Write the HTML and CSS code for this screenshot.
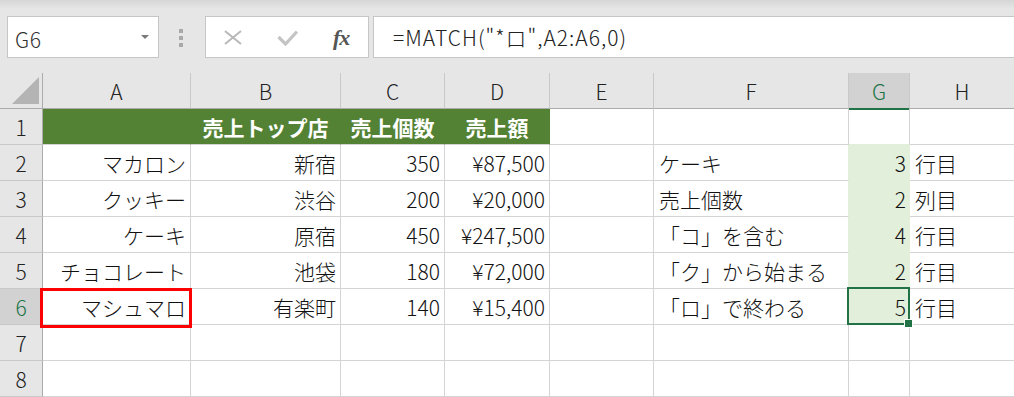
FILE: index.html
```html
<!DOCTYPE html>
<html lang="ja">

<head>
    <meta charset="UTF-8">
    <meta name="viewport" content="width=device-width, initial-scale=1.0">
    <title>MATCH関数</title>
    <link rel="stylesheet" href="styles.css">
</head>

<body>
    <!-- 数式バー -->
    <div class="toolbar">
        <div class="name-box">
            <span class="name">G6</span>
            <span class="drop"></span>
        </div>
        <div class="grip"><span></span><span></span><span></span></div>
        <div class="fx-box">
            <svg class="icon" width="18" height="15" viewBox="0 0 18 15">
                <path d="M1 1 L17 14 M17 1 L1 14" stroke="#b8b8b8" stroke-width="2" fill="none" />
            </svg>
            <svg class="icon" width="21" height="16" viewBox="0 0 21 16">
                <path d="M1.5 7 L8.5 14 L20 1.5" stroke="#c4c4c4" stroke-width="3.2" fill="none" />
            </svg>
            <span class="fx">fx</span>
        </div>
        <div class="formula">=MATCH("*ロ",A2:A6,0)</div>
    </div>

    <!-- シート -->
    <div class="sheet">
        <div class="corner"><svg width="27" height="27" viewBox="0 0 27 27"><path d="M27 0 L27 27 L0 27 Z" fill="#b4b4b4" /></svg></div>
        <div class="ch">A</div>
        <div class="ch">B</div>
        <div class="ch">C</div>
        <div class="ch">D</div>
        <div class="ch">E</div>
        <div class="ch">F</div>
        <div class="ch active">G</div>
        <div class="ch">H</div>

        <div class="rh">1</div>
        <div class="cell hd"></div>
        <div class="cell hd">売上トップ店</div>
        <div class="cell hd">売上個数</div>
        <div class="cell hd">売上額</div>
        <div class="cell"></div>
        <div class="cell"></div>
        <div class="cell top-pick"></div>
        <div class="cell"></div>

        <div class="rh">2</div>
        <div class="cell">マカロン</div>
        <div class="cell">新宿</div>
        <div class="cell">350</div>
        <div class="cell">¥87,500</div>
        <div class="cell"></div>
        <div class="cell left by-pick">ケーキ</div>
        <div class="cell pick">3</div>
        <div class="cell left">行目</div>

        <div class="rh">3</div>
        <div class="cell">クッキー</div>
        <div class="cell">渋谷</div>
        <div class="cell">200</div>
        <div class="cell">¥20,000</div>
        <div class="cell"></div>
        <div class="cell left by-pick">売上個数</div>
        <div class="cell pick">2</div>
        <div class="cell left">列目</div>

        <div class="rh">4</div>
        <div class="cell">ケーキ</div>
        <div class="cell">原宿</div>
        <div class="cell">450</div>
        <div class="cell">¥247,500</div>
        <div class="cell"></div>
        <div class="cell left by-pick">「コ」を含む</div>
        <div class="cell pick">4</div>
        <div class="cell left">行目</div>

        <div class="rh">5</div>
        <div class="cell">チョコレート</div>
        <div class="cell">池袋</div>
        <div class="cell">180</div>
        <div class="cell">¥72,000</div>
        <div class="cell"></div>
        <div class="cell left by-pick">「ク」から始まる</div>
        <div class="cell pick">2</div>
        <div class="cell left">行目</div>

        <div class="rh active">6</div>
        <div class="cell">マシュマロ</div>
        <div class="cell">有楽町</div>
        <div class="cell">140</div>
        <div class="cell">¥15,400</div>
        <div class="cell"></div>
        <div class="cell left by-pick">「ロ」で終わる</div>
        <div class="cell pick last">5</div>
        <div class="cell left">行目</div>

        <div class="rh">7</div>
        <div class="cell"></div>
        <div class="cell"></div>
        <div class="cell"></div>
        <div class="cell"></div>
        <div class="cell"></div>
        <div class="cell"></div>
        <div class="cell"></div>
        <div class="cell"></div>

        <div class="rh">8</div>
        <div class="cell"></div>
        <div class="cell"></div>
        <div class="cell"></div>
        <div class="cell"></div>
        <div class="cell"></div>
        <div class="cell"></div>
        <div class="cell"></div>
        <div class="cell"></div>

        <!-- 選択セル G6 -->
        <div class="selected"></div>
        <div class="handle"></div>
        <!-- 赤枠 A6 -->
        <div class="mark"></div>
    </div>
</body>

</html>
```

FILE: styles.css
```css
body {
    margin: 0;
    padding: 0;
    font-family: 'Noto Sans CJK JP', sans-serif;
    background-color: #fff;
    overflow: hidden;
}

/* 数式バー */
.toolbar {
    display: flex;
    align-items: flex-start;
    height: 42px;
    padding: 16px 0 15px 7px;
    background: linear-gradient(#d6d6d6, #e6e6e6 9px);
}

.name-box,
.fx-box,
.formula {
    box-sizing: border-box;
    height: 42px;
    background-color: #fff;
    border: 1px solid #c6c6c6;
}

.name-box {
    width: 152px;
    display: flex;
    align-items: center;
    justify-content: space-between;
    padding: 3px 9px 0 7px;
}

.name {
    font-size: 21px;
    font-weight: 300;
    color: #333;
    letter-spacing: 0.5px;
}

.drop {
    width: 0;
    height: 0;
    border-left: 4px solid transparent;
    border-right: 4px solid transparent;
    border-top: 4px solid #7a7a7a;
    margin-bottom: 3px;
}

.grip {
    width: 4px;
    margin: 13px 22px 0 20px;
    display: flex;
    flex-direction: column;
    gap: 3px;
}

.grip span {
    width: 4px;
    height: 4px;
    background-color: #a9a9a9;
}

.fx-box {
    width: 164px;
    display: flex;
    align-items: center;
    gap: 35px;
    padding: 1px 0 0 18px;
}

.fx {
    font-family: 'Liberation Serif', serif;
    font-style: italic;
    font-weight: bold;
    font-size: 22px;
    color: #555;
    letter-spacing: -1px;
}

.formula {
    flex: 1;
    margin: 0 -2px 0 4px;
    padding: 2px 0 0 19px;
    font-size: 21px;
    font-weight: 300;
    line-height: 36px;
    color: #222;
    letter-spacing: 1px;
    white-space: nowrap;
}

/* シート */
.sheet {
    position: relative;
    display: grid;
    grid-template-columns: 43px 148px 150px 104px 105px 104px 195px 61px 105px;
    grid-auto-rows: 36px;
    font-size: 21px;
    font-weight: 300;
    color: #111;
}

.sheet > div {
    box-sizing: border-box;
}

.corner,
.ch,
.rh {
    background-color: #e6e6e6;
    display: flex;
    align-items: center;
    justify-content: center;
    color: #222;
    font-size: 21px;
}

.corner {
    border-right: 1px solid #ababab;
    border-bottom: 1px solid #ababab;
    align-items: flex-end;
    justify-content: flex-end;
    padding: 0 3px 4px 0;
}

.corner svg {
    display: block;
}

.ch {
    border-right: 1px solid #c8c8c8;
    border-bottom: 1px solid #ababab;
}

.ch.active {
    background-color: #d2d2d2;
    color: #217346;
    border-bottom: 2px solid #217346;
    margin-bottom: -1px;
    height: 37px;
}

.rh {
    border-right: 1px solid #ababab;
    border-bottom: 1px solid #c8c8c8;
}

.rh.active {
    background-color: #d2d2d2;
    color: #217346;
}

.cell {
    display: flex;
    align-items: center;
    justify-content: flex-end;
    padding: 0 4px 0 5px;
    border-right: 1px solid #d4d4d4;
    border-bottom: 1px solid #d4d4d4;
    white-space: nowrap;
    overflow: hidden;
}

.cell.left {
    justify-content: flex-start;
}

.hd {
    background-color: #548235;
    border-right-color: #548235;
    color: #fff;
    font-weight: bold;
    justify-content: center;
    padding: 0;
}

.pick {
    background-color: #e2efda;
    border-right-color: #e2efda;
    border-bottom-color: #e2efda;
    padding-right: 3px;
}

.pick.last {
    border-bottom-color: #d4d4d4;
}

.top-pick {
    border-bottom-color: #e2efda;
}

.by-pick {
    border-right-color: #e2efda;
}

.selected {
    position: absolute;
    left: 847px;
    top: 214px;
    width: 63px;
    height: 38px;
    border: 2px solid #217346;
}

.handle {
    position: absolute;
    left: 905px;
    top: 247px;
    width: 7px;
    height: 7px;
    background-color: #217346;
    outline: 1px solid #fff;
}

.mark {
    position: absolute;
    left: 40px;
    top: 215px;
    width: 152px;
    height: 40px;
    border: 3px solid #ff0000;
}
```
